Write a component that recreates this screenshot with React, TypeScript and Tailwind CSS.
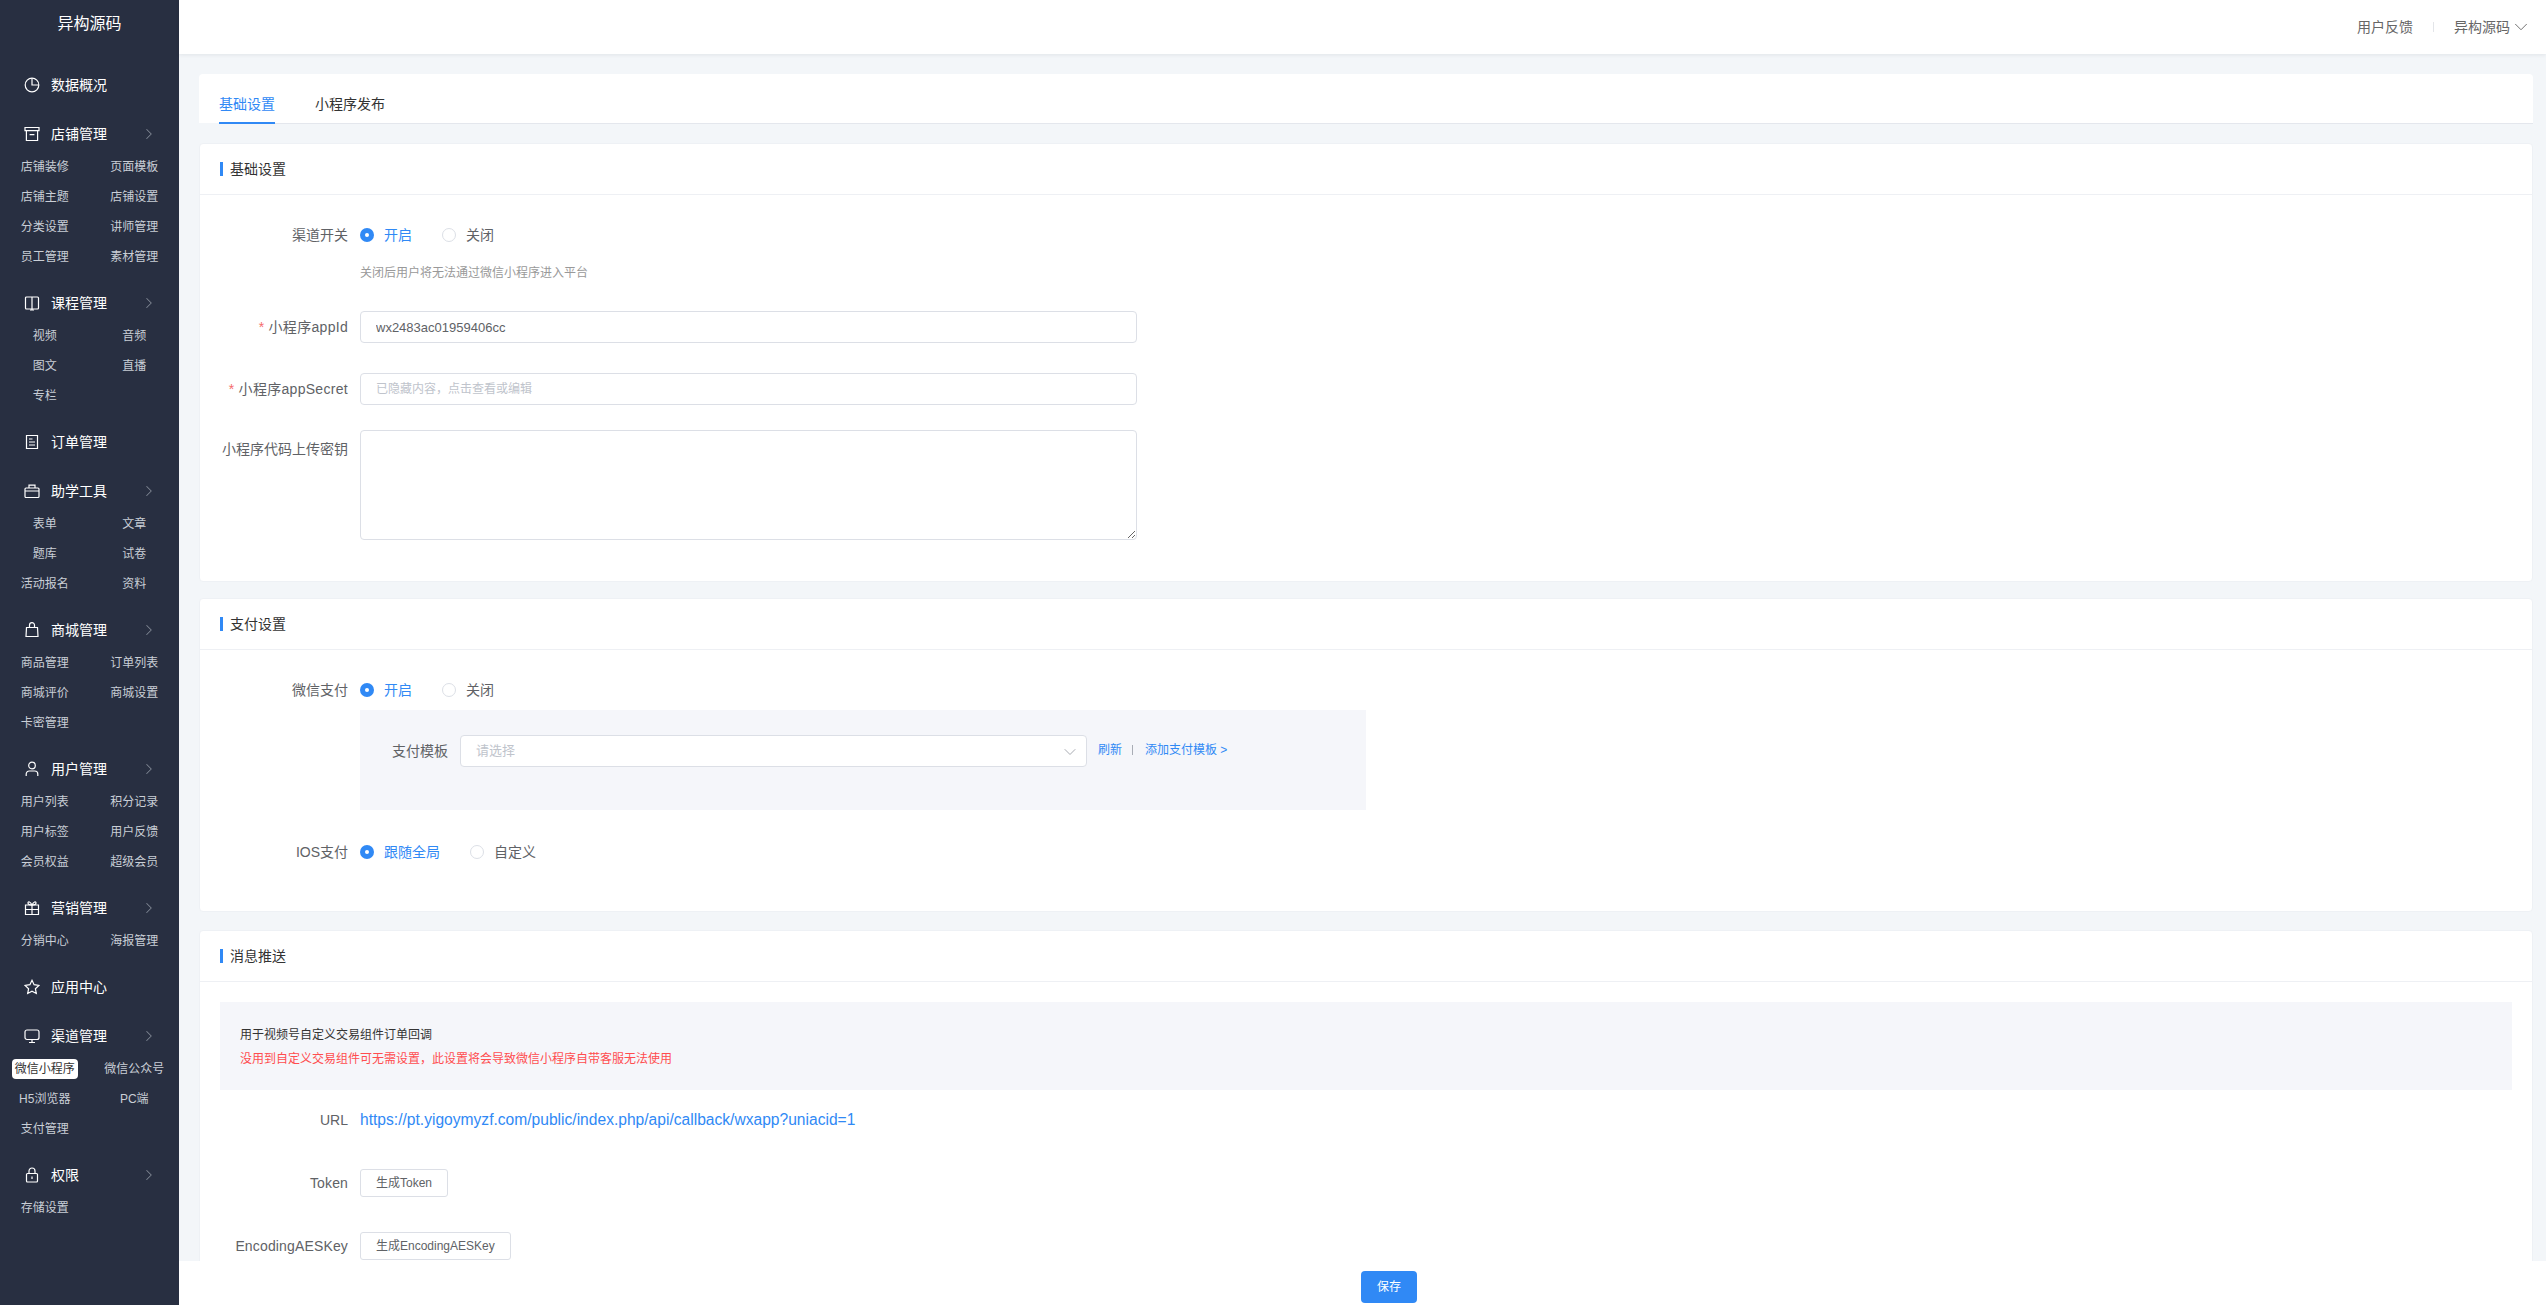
import type {ReactNode} from 'react';
import {ChevronDown, ChevronRight} from 'lucide-react';

type NavGroup = {
  title: string;
  icon: ReactNode;
  arrow?: boolean;
  items?: string[];
};

const navIcons: Record<string, ReactNode> = {
  pie: (
    <>
      <circle cx="8" cy="8" r="6.8" />
      <path d="M8 1.2V8h6.8" />
    </>
  ),
  box: (
    <>
      <path d="M1 1.5h14v3.2H1z" />
      <path d="M2.4 4.7v9.8h11.2V4.7M5.6 8.6h4.8" />
    </>
  ),
  book: (
    <>
      <rect x="1.5" y="2" width="13" height="12" rx="1" />
      <path d="M8 2v13.5M6 15h4" />
    </>
  ),
  order: (
    <>
      <path d="M2.5 1.5h11v13h-11z" />
      <path d="M5 5h3.5M5 8h6M5 11h6" />
    </>
  ),
  case: (
    <>
      <rect x="1" y="5" width="14" height="9.5" rx="1" />
      <path d="M5 5V2.2h6V5M1 8h14" />
    </>
  ),
  bag: (
    <>
      <path d="M2.5 5.5h11l.5 9H2z" />
      <path d="M5.5 5.5V3.2a2.5 2.5 0 0 1 5 0v2.3" />
    </>
  ),
  user: (
    <>
      <circle cx="8" cy="4.5" r="3.3" />
      <path d="M2.2 15v-2a3 3 0 0 1 3-3h5.6a3 3 0 0 1 3 3v2" />
    </>
  ),
  gift: (
    <>
      <path d="M1.5 5h13v9.5h-13zM8 5v9.5M1.5 9.5h13" />
      <path d="M8 5C6.5 1.5 4 1 4 3s2 2 4 2c2 0 4 0 4-2s-2.500-1.500-4 2z" />
    </>
  ),
  star: <path d="M8 1.3l2.100 4.400 4.800.7-3.500 3.300.9 4.800L8 12.200l-4.300 2.300.9-4.800L1.100 6.400l4.800-.7z" />,
  screen: (
    <>
      <rect x="1" y="2" width="14" height="9.500" rx="2" />
      <path d="M8 11.500v3M5 14.500h6" />
    </>
  ),
  lock: (
    <>
      <rect x="2.500" y="6.500" width="11" height="8.500" rx="1" />
      <path d="M5 6.500V4a3 3 0 0 1 6 0v2.500M8 9.500v2.500" />
    </>
  ),
};

const navGroups: NavGroup[] = [
  {title: '数据概况', icon: navIcons.pie},
  {
    title: '店铺管理',
    icon: navIcons.box,
    arrow: true,
    items: ['店铺装修', '页面模板', '店铺主题', '店铺设置', '分类设置', '讲师管理', '员工管理', '素材管理'],
  },
  {title: '课程管理', icon: navIcons.book, arrow: true, items: ['视频', '音频', '图文', '直播', '专栏']},
  {title: '订单管理', icon: navIcons.order},
  {title: '助学工具', icon: navIcons.case, arrow: true, items: ['表单', '文章', '题库', '试卷', '活动报名', '资料']},
  {
    title: '商城管理',
    icon: navIcons.bag,
    arrow: true,
    items: ['商品管理', '订单列表', '商城评价', '商城设置', '卡密管理'],
  },
  {
    title: '用户管理',
    icon: navIcons.user,
    arrow: true,
    items: ['用户列表', '积分记录', '用户标签', '用户反馈', '会员权益', '超级会员'],
  },
  {title: '营销管理', icon: navIcons.gift, arrow: true, items: ['分销中心', '海报管理']},
  {title: '应用中心', icon: navIcons.star},
  {
    title: '渠道管理',
    icon: navIcons.screen,
    arrow: true,
    items: ['微信小程序', '微信公众号', 'H5浏览器', 'PC端', '支付管理'],
  },
  {title: '权限', icon: navIcons.lock, arrow: true, items: ['存储设置']},
];

function Sidebar() {
  return (
    <aside className="w-[179px] shrink-0 h-full bg-[#282f41] overflow-hidden">
      <div className="h-[67px] pt-[12px] text-center text-base leading-6 text-white">异构源码</div>
      {navGroups.map((group) => (
        <div key={group.title} className="mb-[13px]">
          <div className="flex items-center h-9 pl-6 pr-[21px] text-sm text-white">
            <svg
              viewBox="0 0 16 16"
              fill="none"
              stroke="currentColor"
              strokeWidth="1.2"
              className="w-4 h-4 mr-[11px] shrink-0"
            >
              {group.icon}
            </svg>
            <span className="flex-1">{group.title}</span>
            {group.arrow && <ChevronRight size={18} strokeWidth={1.4} className="text-[#7e8592]" />}
          </div>
          {group.items && (
            <div className="grid grid-cols-2">
              {group.items.map((item) => (
                <div key={item} className="flex items-center justify-center h-[30px] text-xs text-[#c9ced6]">
                  <span className={item === '微信小程序' ? 'bg-white text-[#333] rounded-sm px-[3px] leading-5' : ''}>
                    {item}
                  </span>
                </div>
              ))}
            </div>
          )}
        </div>
      ))}
    </aside>
  );
}

function CardTitle({children}: {children: ReactNode}) {
  return (
    <div className="flex items-center h-[51px] pl-5 border-b border-[#eef0f4] text-sm text-[#333]">
      <span className="w-[3px] h-[14px] bg-[#3089f5] mr-[7px]" />
      {children}
    </div>
  );
}

function Label({children, required, wide}: {children: ReactNode; required?: boolean; wide?: boolean}) {
  const tracking = required ? 'tracking-[0.3px]' : wide ? 'tracking-[0.15px]' : '';
  return (
    <div className={`w-[148px] shrink-0 mr-3 text-right text-sm leading-8 text-[#606266] ${tracking}`}>
      {required && <span className="text-[#f56c6c] mr-1">*</span>}
      {children}
    </div>
  );
}

function Radio({label, checked}: {label: string; checked?: boolean}) {
  return (
    <div className="flex items-center mr-[30px] h-8 text-sm">
      <span
        className={
          checked
            ? 'flex items-center justify-center w-[14px] h-[14px] rounded-full bg-[#3089f5] mr-[10px]'
            : 'w-[14px] h-[14px] rounded-full border border-[#dcdfe6] bg-white mr-[10px]'
        }
      >
        {checked && <span className="w-1 h-1 rounded-full bg-white" />}
      </span>
      <span className={checked ? 'text-[#3089f5]' : 'text-[#606266]'}>{label}</span>
    </div>
  );
}

function Card({children, className}: {children: ReactNode; className: string}) {
  return <section className={`bg-white rounded border border-[#eef1f5] shrink-0 ${className}`}>{children}</section>;
}

function GhostButton({children}: {children: ReactNode}) {
  return (
    <button className="h-7 px-[15px] border border-[#dcdfe6] rounded-[3px] bg-white text-xs text-[#606266]">
      {children}
    </button>
  );
}

export default function App() {
  return (
    <div className="flex w-full h-screen overflow-hidden font-['Liberation_Sans','Noto_Sans_CJK_SC',sans-serif]">
      <Sidebar />
      <div className="flex flex-col flex-1 min-w-0 h-full bg-[#f3f6f9]">
        <header className="relative z-10 flex items-center justify-end shrink-0 h-[54px] pr-[14px] bg-white shadow-[0_1px_4px_rgba(0,21,41,0.08)] text-sm text-[#666]">
          <span>用户反馈</span>
          <span className="w-px h-[10px] bg-[#e3e5e9] mx-5" />
          <span>异构源码</span>
          <ChevronDown size={22} strokeWidth={1} className="text-[#666]" />
        </header>

        <main className="flex-1 min-h-0 overflow-hidden pt-5 pl-5 pr-[13px]">
          <div className="h-[49px] pl-5 bg-white rounded-t">
            <div className="flex h-[50px] border-b border-[#e4e7ed] text-sm">
              <div className="h-[50px] pt-5 leading-5 border-b-2 border-[#3089f5] text-[#3089f5]">基础设置</div>
              <div className="ml-10 pt-5 leading-5 text-[#333]">小程序发布</div>
            </div>
          </div>

          <Card className="mt-[20px] h-[439px]">
            <CardTitle>基础设置</CardTitle>
            <div className="pt-6">
              <div className="flex">
                <Label>渠道开关</Label>
                <Radio label="开启" checked />
                <Radio label="关闭" />
              </div>
              <div className="ml-[160px] mt-3 text-xs leading-5 text-[#999]">关闭后用户将无法通过微信小程序进入平台</div>
              <div className="flex mt-[28px]">
                <Label required>小程序appId</Label>
                <input
                  readOnly
                  value="wx2483ac01959406cc"
                  className="w-[777px] h-8 px-[15px] border border-[#dcdfe6] rounded text-[13px] text-[#606266] outline-none"
                />
              </div>
              <div className="flex mt-[30px]">
                <Label required>小程序appSecret</Label>
                <input
                  readOnly
                  placeholder="已隐藏内容，点击查看或编辑"
                  className="w-[777px] h-8 px-[15px] border border-[#dcdfe6] rounded text-xs placeholder:text-[#c0c4cc] outline-none"
                />
              </div>
              <div className="flex mt-[25px]">
                <div className="pt-[3px]">
                  <Label>小程序代码上传密钥</Label>
                </div>
                <textarea readOnly className="w-[777px] h-[110px] border border-[#dcdfe6] rounded outline-none" />
              </div>
            </div>
          </Card>

          <Card className="mt-[16px] h-[314px]">
            <CardTitle>支付设置</CardTitle>
            <div className="pt-6">
              <div className="flex">
                <Label>微信支付</Label>
                <Radio label="开启" checked />
                <Radio label="关闭" />
              </div>
              <div className="flex items-start ml-[160px] mt-1 w-[1006px] h-[100px] pt-[25px] bg-[#f5f6fa]">
                <span className="w-[88px] mr-3 text-right text-sm leading-8 text-[#606266]">支付模板</span>
                <div className="flex items-center justify-between w-[627px] h-8 pl-[15px] pr-[6px] border border-[#dcdfe6] rounded bg-white text-[13px] text-[#c0c4cc]">
                  请选择
                  <ChevronDown size={20} strokeWidth={1.2} className="mt-[2px] text-[#a8abb2]" />
                </div>
                <div className="flex items-center ml-[11px] h-[30px] text-xs text-[#3089f5]">
                  刷新
                  <span className="w-px h-[10px] bg-[#a9adb5] ml-[10px] mr-3" />
                  添加支付模板 &gt;
                </div>
              </div>
              <div className="flex mt-[26px]">
                <Label>IOS支付</Label>
                <Radio label="跟随全局" checked />
                <Radio label="自定义" />
              </div>
            </div>
          </Card>

          <Card className="mt-[18px]">
            <CardTitle>消息推送</CardTitle>
            <div className="mx-5 mt-5 h-[88px] pl-5 pt-[21px] bg-[#f5f6fa] text-xs leading-6">
              <div className="text-[#333]">用于视频号自定义交易组件订单回调</div>
              <div className="text-[#ff4d4f]">没用到自定义交易组件可无需设置，此设置将会导致微信小程序自带客服无法使用</div>
            </div>
            <div className="flex mt-[14px]">
              <Label>URL</Label>
              <span className="text-[15.6px] leading-8 text-[#3089f5]">
                https://pt.yigoymyzf.com/public/index.php/api/callback/wxapp?uniacid=1
              </span>
            </div>
            <div className="flex items-center mt-[31px]">
              <Label wide>Token</Label>
              <GhostButton>生成Token</GhostButton>
            </div>
            <div className="flex items-center mt-[31px] pb-10">
              <Label wide>EncodingAESKey</Label>
              <GhostButton>生成EncodingAESKey</GhostButton>
            </div>
          </Card>
        </main>

        <footer className="flex justify-center shrink-0 h-[44px] pt-[10px] pl-[53px] bg-white">
          <button className="w-14 h-8 rounded bg-[#3089f5] text-xs text-white">保存</button>
        </footer>
      </div>
    </div>
  );
}
